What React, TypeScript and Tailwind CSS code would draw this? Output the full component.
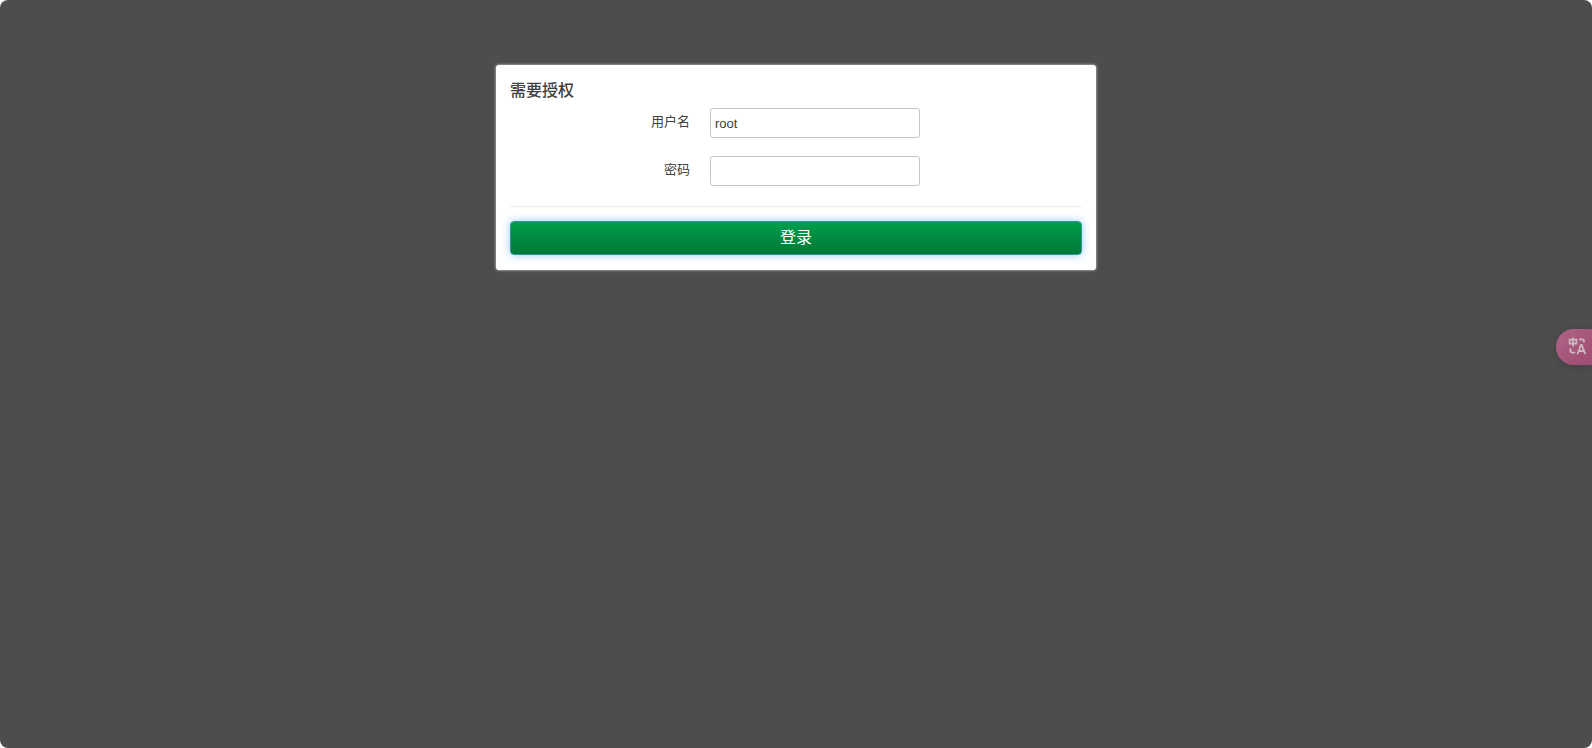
import type { ReactNode } from "react";

function Field({ id, label, children }: { id: string; label: string; children: ReactNode }) {
  return (
    <div className="mb-[18px] flex gap-5">
      <label htmlFor={id} className="w-[180px] shrink-0 pt-[5px] text-right text-[13px] leading-[18px]">
        {label}
      </label>
      {children}
    </div>
  );
}

const inputClass =
  "h-[30px] w-[210px] min-w-0 rounded-[3px] border border-[#c4c4c4] bg-white px-1 text-[13px] leading-[18px] text-[#404040] outline-none";

function TranslateIcon() {
  return (
    <svg
      aria-hidden="true"
      width="18"
      height="18"
      viewBox="0 0 18 18"
      fill="none"
      stroke="#cdb9c2"
      strokeWidth="1.8"
    >
      <path d="M1.6 2.6h6.8v4H1.6zM5 .4v9" />
      <path d="M11 2.4h3q1.9 0 1.9 1.9v1.2" />
      <path d="M2.4 11.4v2.2q0 2 2 2h2.8" />
      <path d="M9.5 17.2l3.5-9.4h.7l3.5 9.4M10.8 14h5.1" />
    </svg>
  );
}

export default function App() {
  return (
    <div className="min-h-screen bg-white font-['Liberation_Sans','Noto_Sans_CJK_SC',sans-serif] text-[#404040]">
      <main className="min-h-screen overflow-hidden rounded-lg bg-[#4d4d4d] px-4 pt-[65px]">
        <form
          className="mx-auto max-w-[600px] rounded-[3px] bg-white px-[14px] pt-[17px] pb-[15px] shadow-[0_0_3px_#dddddd]"
          onSubmit={(event) => event.preventDefault()}
        >
          <h1 className="mb-2 text-[16px] leading-[18px] font-medium">需要授权</h1>
          <Field id="username" label="用户名">
            <input id="username" type="text" defaultValue="root" autoComplete="username" className={inputClass} />
          </Field>
          <Field id="password" label="密码">
            <input id="password" type="password" autoComplete="current-password" className={inputClass} />
          </Field>
          <hr className="mt-5 mb-[14px] border-[#eeeeee]" />
          <button
            type="submit"
            className="block h-[34px] w-full rounded-[4px] border border-[#2c95a0] bg-linear-to-b from-[#009e4d] to-[#007936] text-[16px] leading-[18px] text-white shadow-[0_0_8px_rgba(82,168,255,0.6)]"
          >
            登录
          </button>
        </form>
      </main>
      <button
        type="button"
        aria-label="翻译"
        className="fixed top-[329px] right-0 flex h-9 w-9 items-center rounded-l-full bg-linear-to-br from-[#b06488] to-[#9f4a72] pb-0.5 pl-3 shadow-[0_2px_8px_rgba(0,0,0,0.15)]"
      >
        <TranslateIcon />
      </button>
    </div>
  );
}
